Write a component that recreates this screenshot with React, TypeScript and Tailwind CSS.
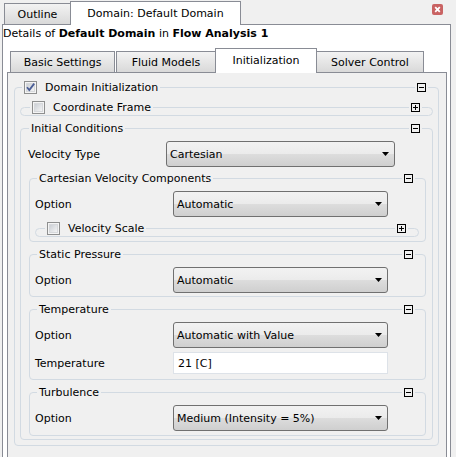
import React from 'react';

const dropBg = 'bg-[linear-gradient(to_bottom,#f2f2f2_0%,#ebebeb_50%,#dddddd_50%,#cfcfcf_100%)]';
const tabBg = 'bg-[linear-gradient(to_bottom,#f3f3f3,#d9d9d9)]';

function CheckBox({ checked }: { checked?: boolean }) {
  return (
    <svg width="13" height="13" viewBox="0 0 13 13" className="block shrink-0">
      <defs>
        <linearGradient id="cbfill" x1="0" y1="0" x2="1" y2="1">
          <stop offset="0" stopColor="#c9cdd3" />
          <stop offset="1" stopColor="#f6f6f6" />
        </linearGradient>
      </defs>
      <rect x="0.5" y="0.5" width="12" height="12" fill="#f4f4f4" stroke="#8e8f8f" />
      <rect x="2.5" y="2.5" width="8" height="8" fill="url(#cbfill)" stroke="#d6d8db" />
      {checked && (
        <path d="M3 6.3l2.3 2.8L10.2 2.6" fill="none" stroke="#4a5d96" strokeWidth="1.8" />
      )}
    </svg>
  );
}

function Toggle({ plus }: { plus?: boolean }) {
  return (
    <svg width="9" height="9" viewBox="0 0 9 9" className="block">
      <rect x="0.5" y="0.5" width="8" height="8" fill="none" stroke="#000" />
      <path d="M2 4.5h5" stroke="#000" />
      {plus && <path d="M4.5 2v5" stroke="#000" />}
    </svg>
  );
}

function Group({
  title,
  check,
  checked,
  collapsed,
  headPad,
  className,
  children,
}: {
  title: string;
  check?: boolean;
  checked?: boolean;
  collapsed?: boolean;
  headPad: string;
  className?: string;
  children?: React.ReactNode;
}) {
  return (
    <div className={`rounded-[4px] border border-[#d2dae2] ${className ?? ''}`}>
      <div className={`-mt-[8px] flex h-[15px] items-center justify-between pr-[10px] ${headPad}`}>
        <span className="flex items-center gap-[8px] bg-[#f0f0f0] px-[2px]">
          {check && <CheckBox checked={checked} />}
          <span>{title}</span>
        </span>
        <span className="flex bg-[#f0f0f0] px-[2px]">
          <Toggle plus={collapsed} />
        </span>
      </div>
      {children}
    </div>
  );
}

function Dropdown({ value, wide }: { value: string; wide?: boolean }) {
  return (
    <div
      className={`flex h-[26px] items-center justify-between rounded-[3px] border border-[#707070] pl-[3px] pr-[5px] ${dropBg} ${
        wide ? 'w-[229px]' : 'w-[215px]'
      }`}
    >
      <span>{value}</span>
      <svg width="7" height="4" viewBox="0 0 7 4" className="block">
        <path d="M0 0h7L3.5 4z" fill="#000" />
      </svg>
    </div>
  );
}

function Row({ label, children, className }: { label: string; children: React.ReactNode; className?: string }) {
  return (
    <div className={`flex items-center pl-[5px] ${className ?? ''}`}>
      <span className="w-[138px]">{label}</span>
      {children}
    </div>
  );
}

export default function App() {
  return (
    <div className="h-[457px] w-[456px] overflow-hidden bg-[#f0f0f0] pl-[2px] font-['DejaVu_Sans',sans-serif] text-[11px] leading-[13px] text-black">
      {/* outer tabs */}
      <div className="relative z-10 -mb-[1px] flex h-[25px] w-[449px] items-end pl-[2px]">
        <div className={`mb-[1px] flex h-[21px] w-[66px] items-center justify-center border-l border-t border-[#898c95] ${tabBg}`}>
          Outline
        </div>
        <div className="flex h-[24px] w-[171px] items-center justify-center border-l border-r border-t border-[#898c95] bg-white pb-[1px]">
          Domain: Default Domain
        </div>
        <div className="mb-auto ml-auto mr-[8px] mt-[4px]">
          <svg width="11" height="11" viewBox="0 0 11 11" className="block">
            <rect width="11" height="11" rx="2" fill="#c96363" />
            <path d="M3.2 3.2l4.6 4.6M7.8 3.2L3.2 7.8" stroke="#fff" strokeWidth="1.8" />
          </svg>
        </div>
      </div>

      {/* outer panel */}
      <div className="w-[449px] border border-[#898c95] bg-white pr-[3px]">
        <div className="h-[23px] pt-[1px] leading-[16px]">
          Details of <b>Default Domain</b> in <b>Flow Analysis 1</b>
        </div>

        {/* inner tabs */}
        <div className="relative z-10 -mb-[1px] flex h-[25px] items-end pl-[7px]">
          <div className={`mb-[1px] flex h-[21px] w-[105px] items-center justify-center border-l border-r border-t border-[#898c95] ${tabBg}`}>
            Basic Settings
          </div>
          <div className={`mb-[1px] ml-[1px] flex h-[21px] w-[99px] items-center justify-center border-l border-t border-[#898c95] ${tabBg}`}>
            Fluid Models
          </div>
          <div className="flex h-[25px] w-[102px] items-center justify-center border-l border-r border-t border-[#898c95] bg-white pb-[1px]">
            Initialization
          </div>
          <div className={`mb-[1px] flex h-[21px] w-[107px] items-center justify-center border-r border-t border-[#898c95] ${tabBg}`}>
            Solver Control
          </div>
        </div>

        {/* inner pane */}
        <div className="ml-[4px] border border-[#898c95] bg-[#f0f0f0] pb-[30px] pl-[6px] pr-[7px] pt-[14px]">
          <Group title="Domain Initialization" check checked headPad="pl-[7px]" className="pb-[5px]">
            <Group title="Coordinate Frame" check collapsed headPad="pl-[9px]" className="mx-[5px] mt-[12px] h-[9px] rounded-[5px]" />

            <Group title="Initial Conditions" headPad="pl-[8px]" className="mx-[5px] mt-[12px] pb-[3px]">
              <div className="mt-[5px] flex items-center pl-[7px]">
                <span className="w-[138px]">Velocity Type</span>
                <Dropdown value="Cartesian" wide />
              </div>

              <Group title="Cartesian Velocity Components" headPad="pl-[7px]" className="ml-[8px] mr-[6px] mt-[11px] pb-[4px]">
                <Row label="Option" className="mt-[5px]">
                  <Dropdown value="Automatic" />
                </Row>
                <Group title="Velocity Scale" check collapsed headPad="pl-[9px]" className="ml-[5px] mr-[6px] mt-[11px] h-[9px] rounded-[5px]" />
              </Group>

              <Group title="Static Pressure" headPad="pl-[7px]" className="ml-[8px] mr-[6px] mt-[12px] pb-[3px]">
                <Row label="Option" className="mt-[5px]">
                  <Dropdown value="Automatic" />
                </Row>
              </Group>

              <Group title="Temperature" headPad="pl-[7px]" className="ml-[8px] mr-[6px] mt-[12px] pb-[5px]">
                <Row label="Option" className="mt-[5px]">
                  <Dropdown value="Automatic with Value" />
                </Row>
                <Row label="Temperature" className="mt-[4px]">
                  <div className="flex h-[22px] w-[215px] items-center border border-[#dde2e8] bg-white pl-[4px]">21 [C]</div>
                </Row>
              </Group>

              <Group title="Turbulence" headPad="pl-[7px]" className="ml-[8px] mr-[6px] mt-[12px] pb-[4px]">
                <Row label="Option" className="mt-[5px]">
                  <Dropdown value="Medium (Intensity = 5%)" />
                </Row>
              </Group>
            </Group>
          </Group>
        </div>
      </div>
    </div>
  );
}
